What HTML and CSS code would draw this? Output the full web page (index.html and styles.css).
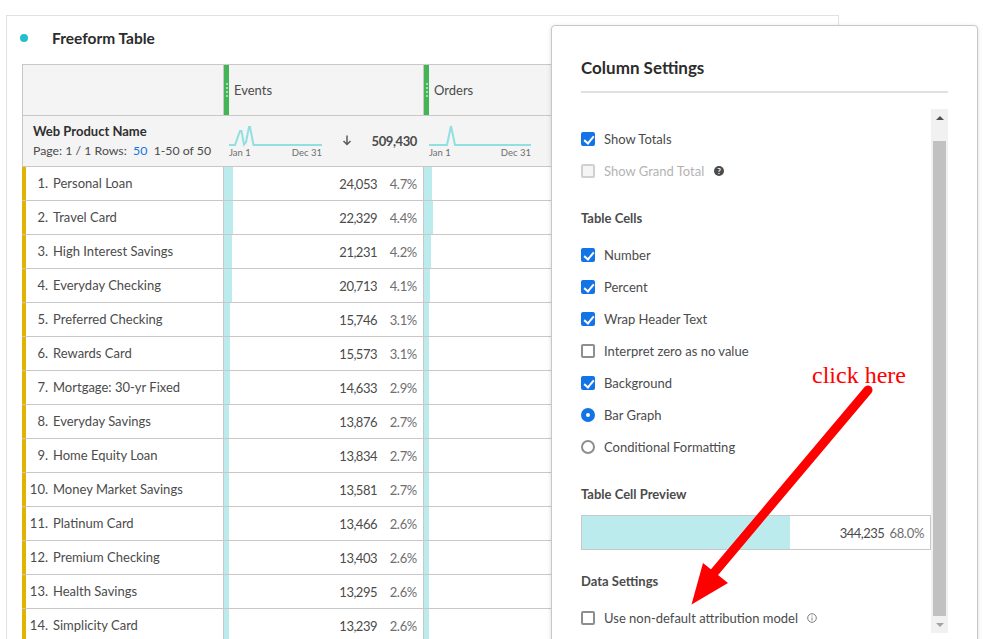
FILE: index.html
```html
<!DOCTYPE html>
<html lang="en">
<head>
  <meta charset="UTF-8">
  <title>Freeform Table</title>
  <link rel="stylesheet" href="styles.css">
</head>
<body>
  <section class="card">
    <div class="card-title"><span class="dot"></span><h2>Freeform Table</h2></div>
    <div class="table">
      <div class="row head-row">
        <div class="name-cell"></div>
        <div class="col-head"><span class="handle"><i></i><i></i><i></i><i></i></span>Events</div>
        <div class="col-head"><span class="handle"><i></i><i></i><i></i><i></i></span>Orders</div>
        <div class="col-head"></div>
      </div>
      <div class="row head-row">
        <div class="name-cell dim-cell">
          <strong>Web Product Name</strong>
          <div class="pager">Page: 1 / 1 Rows:&nbsp; <a>50</a> &nbsp;1-50 of 50</div>
        </div>
        <div class="total-cell">
          <div class="spark spark-events">
            <svg viewBox="0 0 93 24" width="93" height="24"><path d="M0 20H6L11 6 12.500 6 15 19.500 17 17 20 2 21 2 24.500 20H93"/></svg>
            <div class="spark-dates"><span>Jan 1</span><span>Dec 31</span></div>
          </div>
          <svg class="sort-arrow" viewBox="0 0 10 11" width="10" height="11"><path d="M5 0.500V9.500M1.500 6L5 9.500 8.500 6"/></svg>
          <b>509,430</b>
        </div>
        <div class="total-cell">
          <div class="spark spark-orders">
            <svg viewBox="0 0 102 24" width="102" height="24"><path d="M0 20H18L22 1 26 20H102"/></svg>
            <div class="spark-dates"><span>Jan 1</span><span>Dec 31</span></div>
          </div>
        </div>
        <div class="total-cell"></div>
      </div>

      <div class="row"><div class="name-cell item"><span class="idx">1.</span>Personal Loan</div>
        <div class="metric"><span class="bar" style="width:9.400px"></span><span class="num">24,053</span><span class="pct">4.7%</span></div>
        <div class="metric"><span class="bar" style="width:8px"></span></div><div class="metric"></div></div>
      <div class="row"><div class="name-cell item"><span class="idx">2.</span>Travel Card</div>
        <div class="metric"><span class="bar" style="width:8.800px"></span><span class="num">22,329</span><span class="pct">4.4%</span></div>
        <div class="metric"><span class="bar" style="width:9px"></span></div><div class="metric"></div></div>
      <div class="row"><div class="name-cell item"><span class="idx">3.</span>High Interest Savings</div>
        <div class="metric"><span class="bar" style="width:8.400px"></span><span class="num">21,231</span><span class="pct">4.2%</span></div>
        <div class="metric"><span class="bar" style="width:7px"></span></div><div class="metric"></div></div>
      <div class="row"><div class="name-cell item"><span class="idx">4.</span>Everyday Checking</div>
        <div class="metric"><span class="bar" style="width:8.200px"></span><span class="num">20,713</span><span class="pct">4.1%</span></div>
        <div class="metric"><span class="bar" style="width:6px"></span></div><div class="metric"></div></div>
      <div class="row"><div class="name-cell item"><span class="idx">5.</span>Preferred Checking</div>
        <div class="metric"><span class="bar" style="width:6.200px"></span><span class="num">15,746</span><span class="pct">3.1%</span></div>
        <div class="metric"><span class="bar" style="width:5px"></span></div><div class="metric"></div></div>
      <div class="row"><div class="name-cell item"><span class="idx">6.</span>Rewards Card</div>
        <div class="metric"><span class="bar" style="width:6.200px"></span><span class="num">15,573</span><span class="pct">3.1%</span></div>
        <div class="metric"><span class="bar" style="width:5px"></span></div><div class="metric"></div></div>
      <div class="row"><div class="name-cell item"><span class="idx">7.</span>Mortgage: 30-yr Fixed</div>
        <div class="metric"><span class="bar" style="width:5.800px"></span><span class="num">14,633</span><span class="pct">2.9%</span></div>
        <div class="metric"><span class="bar" style="width:5px"></span></div><div class="metric"></div></div>
      <div class="row"><div class="name-cell item"><span class="idx">8.</span>Everyday Savings</div>
        <div class="metric"><span class="bar" style="width:5.400px"></span><span class="num">13,876</span><span class="pct">2.7%</span></div>
        <div class="metric"><span class="bar" style="width:5px"></span></div><div class="metric"></div></div>
      <div class="row"><div class="name-cell item"><span class="idx">9.</span>Home Equity Loan</div>
        <div class="metric"><span class="bar" style="width:5.400px"></span><span class="num">13,834</span><span class="pct">2.7%</span></div>
        <div class="metric"><span class="bar" style="width:5px"></span></div><div class="metric"></div></div>
      <div class="row"><div class="name-cell item"><span class="idx">10.</span>Money Market Savings</div>
        <div class="metric"><span class="bar" style="width:5.400px"></span><span class="num">13,581</span><span class="pct">2.7%</span></div>
        <div class="metric"><span class="bar" style="width:5px"></span></div><div class="metric"></div></div>
      <div class="row"><div class="name-cell item"><span class="idx">11.</span>Platinum Card</div>
        <div class="metric"><span class="bar" style="width:5.200px"></span><span class="num">13,466</span><span class="pct">2.6%</span></div>
        <div class="metric"><span class="bar" style="width:5px"></span></div><div class="metric"></div></div>
      <div class="row"><div class="name-cell item"><span class="idx">12.</span>Premium Checking</div>
        <div class="metric"><span class="bar" style="width:5.200px"></span><span class="num">13,403</span><span class="pct">2.6%</span></div>
        <div class="metric"><span class="bar" style="width:5px"></span></div><div class="metric"></div></div>
      <div class="row"><div class="name-cell item"><span class="idx">13.</span>Health Savings</div>
        <div class="metric"><span class="bar" style="width:5.200px"></span><span class="num">13,295</span><span class="pct">2.6%</span></div>
        <div class="metric"><span class="bar" style="width:5px"></span></div><div class="metric"></div></div>
      <div class="row"><div class="name-cell item"><span class="idx">14.</span>Simplicity Card</div>
        <div class="metric"><span class="bar" style="width:5.200px"></span><span class="num">13,239</span><span class="pct">2.6%</span></div>
        <div class="metric"><span class="bar" style="width:5px"></span></div><div class="metric"></div></div>
    </div>
  </section>

  <aside class="panel">
    <h3>Column Settings</h3>
    <div class="panel-body">
      <div class="settings">
        <label class="opt"><span class="box checked"></span>Show Totals</label>
        <label class="opt disabled"><span class="box"></span>Show Grand Total
          <svg class="help" viewBox="0 0 10 10" width="10" height="10"><circle cx="5" cy="5" r="5"/><text x="5" y="8" text-anchor="middle">?</text></svg>
        </label>

        <h4>Table Cells</h4>
        <label class="opt"><span class="box checked"></span>Number</label>
        <label class="opt"><span class="box checked"></span>Percent</label>
        <label class="opt"><span class="box checked"></span>Wrap Header Text</label>
        <label class="opt"><span class="box"></span>Interpret zero as no value</label>
        <label class="opt"><span class="box checked"></span>Background</label>
        <label class="opt"><span class="radio on"></span>Bar Graph</label>
        <label class="opt"><span class="radio"></span>Conditional Formatting</label>

        <h4>Table Cell Preview</h4>
        <div class="preview">
          <span class="preview-bar" style="width:208px"></span>
          <span class="preview-num">344,235</span><span class="preview-pct">68.0%</span>
        </div>

        <h4>Data Settings</h4>
        <label class="opt"><span class="box"></span>Use non-default attribution model
          <svg class="info" viewBox="0 0 10 10" width="10" height="10"><circle cx="5" cy="5" r="4.300"/><path d="M5 4.500V7.500M5 2.500V3.500"/></svg>
        </label>
      </div>
      <div class="scrollbar">
        <span class="scroll-btn"><i class="tri-up"></i></span>
        <span class="thumb"></span>
        <span class="scroll-btn"><i class="tri-down"></i></span>
      </div>
    </div>
  </aside>

  <div class="note">click here</div>
  <svg class="arrow" viewBox="680 380 200 230" width="200" height="230">
    <path class="arrow-line" d="M868 390L713 574"/>
    <path class="arrow-head" d="M691.500 604.500L703 563 728 583Z"/>
  </svg>
</body>
</html>
```

FILE: styles.css
```css
* {
  box-sizing: border-box;
}
html, body {
  height: 639px;
  overflow: hidden;
}
body {
  position: relative;
  margin: 0;
  background: #fff;
  color: #4b4b4b;
  font-family: Lato, 'Open Sans', sans-serif;
  font-size: 13px;
}

/* freeform table card */
.card {
  width: 833px;
  height: 640px;
  margin: 15px 0 0 6px;
  border: 1px solid #e1e1e1;
}
.card-title {
  display: flex;
  align-items: center;
  height: 44px;
  margin-bottom: 4px;
  padding-left: 13px;
}
.dot {
  width: 8px;
  height: 8px;
  margin-right: 24px;
  border-radius: 50%;
  background: #22bfcf;
}
.card-title h2 {
  margin: 0;
  color: #2c2c2c;
  font-size: 15.500px;
  font-weight: 700;
}
.table {
  margin-left: 15px;
  width: 800px;
  border-top: 1px solid #c8c8c8;
}
.row {
  display: grid;
  grid-template-columns: 201px 200px 200px 1fr;
  height: 34px;
  border-bottom: 1px solid #c8c8c8;
}
.head-row {
  height: 51px;
  background: #f4f4f4;
}
.name-cell {
  border-left: 1px solid #c8c8c8;
}
.dim-cell {
  padding: 6px 0 0 10px;
}
.dim-cell strong {
  display: block;
  color: #2f2f2f;
  line-height: 18px;
}
.pager {
  margin-top: 2px;
  font-size: 12.300px;
  line-height: 18px;
  white-space: nowrap;
}
.pager a {
  color: #1473e6;
}
.item {
  display: flex;
  align-items: center;
  padding-bottom: 1px;
  border-left: 4px solid #e0b400;
}
.idx {
  width: 22px;
  margin-right: 5px;
  text-align: right;
}

.col-head {
  display: flex;
  align-items: center;
  border-left: 1px solid #c8c8c8;
}
.handle {
  display: flex;
  flex-direction: column;
  align-items: center;
  justify-content: center;
  gap: 2px;
  width: 5px;
  height: 100%;
  margin-right: 5px;
  background: #44b556;
}
.handle i {
  width: 2px;
  height: 2px;
  border-radius: 50%;
  background: #c6ecc9;
}
.total-cell {
  display: flex;
  align-items: center;
  padding: 0 6px 0 6px;
}
.total-cell b {
  margin-left: auto;
  margin-top: -1px;
  color: #4b4b4b;
  letter-spacing: -0.400px;
}
.sort-arrow {
  margin: -2px 0 0 20px;
  fill: none;
  stroke: #5a5a5a;
  stroke-width: 1.500;
}
.spark {
  display: flex;
  flex-direction: column;
  margin-top: 2px;
}
.spark-events {
  width: 93px;
}
.spark-orders {
  width: 102px;
}
.spark svg {
  display: block;
  fill: none;
  stroke: #91dfe1;
  stroke-width: 2;
}
.spark-dates {
  display: flex;
  justify-content: space-between;
  margin-top: -2px;
  color: #6e6e6e;
  font-size: 9.500px;
  line-height: 12px;
}
.metric {
  display: flex;
  align-items: center;
  padding-right: 6px;
  border-left: 1px solid #c8c8c8;
}
.bar {
  align-self: stretch;
  background: #bbebed;
}
.num {
  margin-left: auto;
  letter-spacing: -0.500px;
}
.pct {
  width: 40px;
  text-align: right;
  color: #6e6e6e;
  letter-spacing: -0.300px;
}

/* settings panel, lies over the table */
.panel {
  position: absolute;
  top: 25px;
  left: 551px;
  width: 427px;
  height: 640px;
  padding: 0 29px;
  background: #fff;
  border: 1px solid #c8c8c8;
  border-radius: 4px;
  box-shadow: 0 1px 4px rgba(0,0,0,0.15);
}
.panel h3 {
  margin: 0 0 16px 0;
  height: 67px;
  padding-top: 30px;
  border-bottom: 2px solid #e1e1e1;
  color: #2c2c2c;
  font-size: 17px;
  font-weight: 700;
  line-height: 24px;
}
.panel-body {
  display: flex;
  height: 524px;
}
.settings {
  width: 350px;
  padding-top: 14px;
}
.settings h4 {
  height: 20px;
  margin: 21px 0 11px 0;
  font-size: 13px;
  font-weight: 700;
  line-height: 20px;
}
.opt {
  display: flex;
  align-items: center;
  height: 32px;
}
.disabled {
  color: #b3b3b3;
}
.box, .radio {
  width: 14px;
  height: 14px;
  margin-right: 9px;
  border: 2px solid #8e8e8e;
  border-radius: 2px;
}
.disabled .box {
  border-color: #d0d0d0;
  background: #f5f5f5;
}
.box.checked {
  position: relative;
  background: #1473e6;
  border-color: #1473e6;
}
.box.checked::after {
  content: "";
  position: absolute;
  left: 2.500px;
  top: -0.500px;
  width: 4px;
  height: 8px;
  border: solid #fff;
  border-width: 0 2px 2px 0;
  transform: rotate(40deg);
}
.radio {
  border-radius: 50%;
}
.radio.on {
  border: 5px solid #1473e6;
}
.help {
  margin-left: 10px;
  fill: #4b4b4b;
}
.help text {
  fill: #fff;
  font-size: 8px;
  font-weight: 700;
}
.info {
  margin-left: 9px;
  fill: none;
  stroke: #6e6e6e;
  stroke-width: 0.900;
}
.preview {
  display: flex;
  align-items: center;
  height: 35px;
  padding-right: 6px;
  border: 1px solid #c8c8c8;
}
.preview-bar {
  align-self: stretch;
  background: #bbebed;
}
.preview-num {
  margin-left: auto;
  letter-spacing: -0.500px;
}
.preview-pct {
  margin-left: 5px;
  color: #6e6e6e;
  letter-spacing: -0.300px;
}
.scrollbar {
  display: flex;
  flex-direction: column;
  align-items: center;
  width: 17px;
  background: #f1f1f1;
}
.scroll-btn {
  display: flex;
  align-items: center;
  justify-content: center;
  height: 17px;
  width: 100%;
}
.thumb {
  flex: 1;
  width: 13px;
  margin-top: 15px;
  background: #c1c1c1;
}
.tri-up, .tri-down {
  border-left: 4px solid transparent;
  border-right: 4px solid transparent;
}
.tri-up {
  border-bottom: 4px solid #505050;
}
.tri-down {
  border-top: 4px solid #a3a3a3;
}

/* red annotation on top of the screenshot */
.note {
  position: absolute;
  top: 360px;
  left: 812px;
  color: #f00;
  font-family: 'Liberation Serif', serif;
  font-size: 24px;
  line-height: 30px;
  white-space: nowrap;
}
.arrow {
  position: absolute;
  top: 380px;
  left: 680px;
}
.arrow-line {
  fill: none;
  stroke: #fe0000;
  stroke-width: 9;
  stroke-linecap: round;
}
.arrow-head {
  fill: #fe0000;
}
```
